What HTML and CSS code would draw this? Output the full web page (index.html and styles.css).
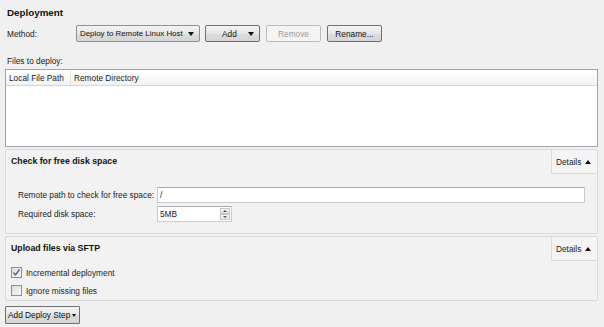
FILE: index.html
```html
<!DOCTYPE html>
<html>
<head>
<meta charset="utf-8">
<link rel="stylesheet" href="styles.css">
</head>
<body>
<div class="page">
  <div class="title">Deployment</div>
  <div class="method-row">
    <span class="method-label">Method:</span>
    <div class="btn combo">Deploy to Remote Linux Host<span class="tri down abs"></span></div>
    <div class="btn add">Add<span class="tri down abs"></span></div>
    <div class="btn disabled">Remove</div>
    <div class="btn rename">Rename...</div>
  </div>
  <div class="files-label">Files to deploy:</div>
  <div class="table">
    <div class="thead">
      <div class="th th1">Local File Path</div>
      <div class="th th2">Remote Directory</div>
    </div>
  </div>

  <div class="panel panel1">
    <div class="panel-head">
      <div class="panel-title">Check for free disk space</div>
      <div class="details">Details<span class="tri up"></span></div>
    </div>
    <div class="form">
      <div class="form-row">
        <span class="form-label">Remote path to check for free space:</span>
        <div class="input wide">/</div>
      </div>
      <div class="form-row">
        <span class="form-label">Required disk space:</span>
        <div class="input spin">5MB<span class="spinbtns"><span class="sb"><span class="mini up"></span></span><span class="sb"><span class="mini down"></span></span></span></div>
      </div>
    </div>
  </div>

  <div class="panel panel2">
    <div class="panel-head">
      <div class="panel-title">Upload files via SFTP</div>
      <div class="details">Details<span class="tri up"></span></div>
    </div>
    <div class="checks">
      <label class="check"><span class="box"><svg width="9" height="9" viewBox="0 0 9 9"><path d="M1.5 4.5 L3.5 7 L7.5 1.5" fill="none" stroke="#4a5f8a" stroke-width="1.3"/></svg></span>Incremental deployment</label>
      <label class="check"><span class="box"></span>Ignore missing files</label>
    </div>
  </div>

  <div class="btn step">Add Deploy Step<span class="tri down small"></span></div>
</div>
</body>
</html>
```
FILE: styles.css
```css
html, body {
  margin: 0;
  padding: 0;
  background: #f0f0f0;
}
.page {
  width: 604px;
  height: 327px;
  box-sizing: border-box;
  padding: 6px 6px 0 5px;
  font-family: "Liberation Sans", Arial, sans-serif;
  font-size: 8.3px;
  color: #1a1a1a;
  display: flex;
  flex-direction: column;
}
.title {
  font-weight: bold;
  font-size: 9.8px;
  line-height: 13px;
  padding-left: 2px;
  color: #111;
}
.method-row {
  display: flex;
  align-items: center;
  margin-top: 6px;
  height: 17px;
}
.method-label {
  width: 69px;
  padding-left: 2px;
}
.btn {
  box-sizing: border-box;
  height: 17px;
  border: 1px solid #707070;
  border-radius: 2px;
  background: linear-gradient(#f4f4f4, #e6e6e6 50%, #dcdcdc 51%, #d6d6d6);
  display: flex;
  align-items: center;
  justify-content: center;
  position: relative;
  color: #111;
}
.combo {
  width: 124px;
  justify-content: flex-start;
  padding-left: 3px;
  margin-right: 5px;
  border-color: #8e8f8f;
  font-size: 7.9px;
}
.tri {
  width: 0;
  height: 0;
  border-left: 3px solid transparent;
  border-right: 3px solid transparent;
}
.tri.down {
  border-top: 4px solid #111;
}
.tri.up {
  border-bottom: 4px solid #111;
  margin-left: 4px;
}
.tri.abs {
  position: absolute;
  right: 5px;
  top: 6px;
}
.tri.small {
  border-left-width: 2.5px;
  border-right-width: 2.5px;
  border-top-width: 3px;
  margin-left: 2px;
}
.add {
  width: 55px;
  margin-right: 6px;
  justify-content: flex-start;
  padding-left: 16px;
}
.disabled {
  width: 55px;
  margin-right: 6px;
  color: #9a9a9a;
  border-color: #bcbcbc;
  background: #f4f4f4;
}
.rename {
  width: 55px;
}
.files-label {
  margin-top: 14px;
  line-height: 10px;
  padding-left: 2px;
}
.table {
  margin-top: 3px;
  height: 78px;
  box-sizing: border-box;
  width: 593px;
  border: 1px solid #a2a4ab;
  background: #fff;
}
.thead {
  display: flex;
  height: 16px;
  box-sizing: border-box;
  border-bottom: 1px solid #d5d5d5;
  background: linear-gradient(#ffffff, #f1f2f4);
}
.th {
  display: flex;
  align-items: center;
  padding-left: 3px;
  box-sizing: border-box;
}
.th1 {
  width: 65px;
  border-right: 1px solid #e0e0e0;
}
.panel {
  width: 593px;
  box-sizing: border-box;
  border: 1px solid #d9d9d9;
  border-radius: 2px;
  background: #f2f2f2;
  margin-top: 2px;
}
.panel1 { height: 85px; margin-top: 2px; }
.panel2 { height: 65px; margin-top: 2px; }
.panel-head {
  display: flex;
  justify-content: space-between;
  height: 24px;
}
.panel-title {
  font-weight: bold;
  font-size: 8.75px;
  padding: 6px 0 0 5px;
  color: #111;
}
.details {
  width: 46px;
  box-sizing: border-box;
  border-left: 1px solid #dadada;
  border-bottom: 1px solid #dadada;
  background: #f4f4f4;
  display: flex;
  align-items: center;
  padding-left: 4px;
  color: #222;
}
.form {
  padding: 13px 0 0 12px;
  display: flex;
  flex-direction: column;
  gap: 3px;
}
.form-row {
  display: flex;
  align-items: center;
}
.form-label {
  width: 139px;
}
.input {
  box-sizing: border-box;
  height: 16px;
  border: 1px solid #c9cbd0;
  border-top-color: #abadb3;
  background: #fff;
  display: flex;
  align-items: center;
  padding-left: 2px;
}
.wide { width: 428px; }
.spin {
  width: 75px;
  position: relative;
}
.spinbtns {
  position: absolute;
  right: 1px;
  top: 1px;
  bottom: 1px;
  width: 10px;
  display: flex;
  flex-direction: column;
}
.sb {
  flex: 1;
  background: linear-gradient(#f6f6f6, #e4e4e4);
  border: 1px solid #c8c8c8;
  display: flex;
  align-items: center;
  justify-content: center;
}
.mini {
  width: 0;
  height: 0;
  border-left: 2px solid transparent;
  border-right: 2px solid transparent;
}
.mini.up { border-bottom: 2px solid #555; }
.mini.down { border-top: 2px solid #555; }
.checks {
  display: flex;
  flex-direction: column;
  gap: 7px;
  padding: 6px 0 0 5px;
}
.check {
  display: flex;
  align-items: center;
  height: 11px;
}
.box {
  box-sizing: border-box;
  width: 11px;
  height: 11px;
  border: 1px solid #8f8f8f;
  background: linear-gradient(135deg, #dcdcdc, #f8f8f8);
  margin-right: 4px;
  display: flex;
  align-items: center;
  justify-content: center;
}
.step {
  margin-top: 5px;
  width: 75px;
  height: 18px;
  justify-content: flex-start;
  padding-left: 2px;
  border-radius: 1px;
}
```
